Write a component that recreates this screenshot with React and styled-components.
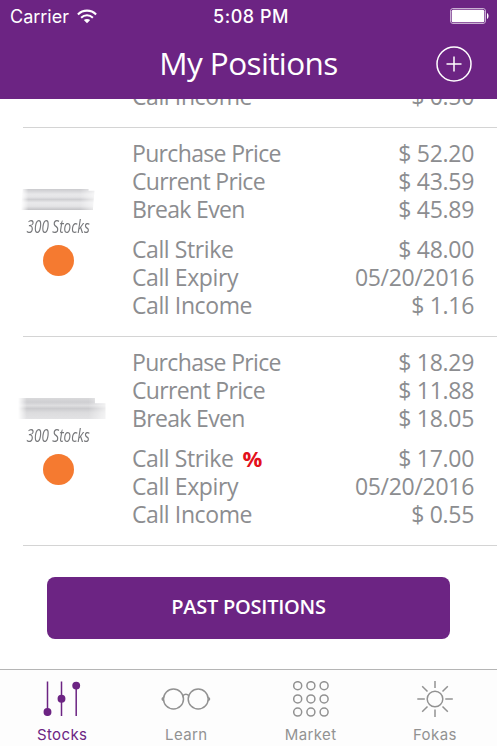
import React, { useState } from "react";
import styled, { createGlobalStyle } from "styled-components";

const positions = [
    {
        id: 1,
        groups: [[{ label: "Call Income", value: "$ 0.50" }]],
    },
    {
        id: 2,
        stocks: "300 Stocks",
        mask: "short",
        groups: [
            [
                { label: "Purchase Price", value: "$ 52.20", tight: true },
                { label: "Current Price", value: "$ 43.59", tight: true },
                { label: "Break Even", value: "$ 45.89", tight: true },
            ],
            [
                { label: "Call Strike", value: "$ 48.00" },
                { label: "Call Expiry", value: "05/20/2016" },
                { label: "Call Income", value: "$ 1.16" },
            ],
        ],
    },
    {
        id: 3,
        stocks: "300 Stocks",
        mask: "long",
        groups: [
            [
                { label: "Purchase Price", value: "$ 18.29", tight: true },
                { label: "Current Price", value: "$ 11.88", tight: true },
                { label: "Break Even", value: "$ 18.05", tight: true },
            ],
            [
                { label: "Call Strike", value: "$ 17.00", percent: true },
                { label: "Call Expiry", value: "05/20/2016" },
                { label: "Call Income", value: "$ 0.55" },
            ],
        ],
    },
];

const WifiIcon = () => (
    <svg width="20" height="15" viewBox="0 0 20 15" fill="none" stroke="#fff" strokeWidth="2.1">
        <path d="M0.9 5.4 C6 0.4 14 0.4 19.1 5.4" />
        <path d="M4.1 8.7 C7.5 5.5 12.5 5.5 15.9 8.7" />
        <path d="M10 14.2 L6.8 11.1 C8.6 9.5 11.4 9.5 13.2 11.1 Z" fill="#fff" stroke="none" />
    </svg>
);

const BatteryIcon = () => (
    <svg width="39" height="16" viewBox="0 0 39 16">
        <rect x="0.5" y="0.5" width="35" height="15" rx="2.5" fill="none" stroke="#c9b0d3" />
        <rect x="1.7" y="1.7" width="32.6" height="12.6" rx="1.5" fill="#fff" />
        <path d="M37 5 C39 5.8 39 10.2 37 11 Z" fill="#fff" />
    </svg>
);

const PlusIcon = () => (
    <svg width="36" height="36" viewBox="0 0 36 36" fill="none" stroke="#fff" strokeWidth="1.5">
        <circle cx="18" cy="18" r="17" />
        <path d="M18 10.5 V25.5 M10.5 18 H25.5" />
    </svg>
);

const StocksIcon = () => (
    <svg width="38" height="36" viewBox="0 0 38 36" fill="#6c2483" stroke="#6c2483" strokeWidth="1.5">
        <path d="M4.5 0.5 V35 M18.5 0.5 V35 M33.2 3 V35" />
        <circle cx="4.5" cy="31" r="3.2" />
        <circle cx="18.5" cy="17.8" r="3.2" />
        <circle cx="33.2" cy="4.6" r="3.2" />
    </svg>
);

const GlassesIcon = () => (
    <svg width="50" height="36" viewBox="0 0 50 36" fill="none" stroke="#929292" strokeWidth="1.5">
        <circle cx="12.5" cy="18" r="10" />
        <circle cx="37.2" cy="18" r="10" />
        <path d="M22 14.8 C23.5 12.8 26.3 12.8 27.8 14.8" />
        <path d="M2.5 16.5 C0.7 17.2 0.7 18.8 2.5 19.5 M47.2 16.5 C49 17.2 49 18.8 47.2 19.5" />
    </svg>
);

const MarketIcon = () => (
    <svg width="36" height="36" viewBox="0 0 36 36" fill="none" stroke="#929292" strokeWidth="1.5">
        {[4.7, 17.9, 31.1].map((y) =>
            [4.7, 17.9, 31.1].map((x) => <circle key={`${x}-${y}`} cx={x} cy={y} r="4" />)
        )}
    </svg>
);

const SunIcon = () => (
    <svg width="36" height="36" viewBox="0 0 36 36" fill="none" stroke="#929292" strokeWidth="1.5">
        <circle cx="18" cy="18" r="7.8" />
        <path d="M18 0 V7 M18 28.5 V36 M0.3 18 H7.8 M28.3 18 H35.8" />
        <path d="M5.2 5.2 L10.5 10.5 M25.5 10.5 L30.8 5.2 M5.2 30.8 L10.5 25.5 M25.5 25.5 L30.8 30.8" />
    </svg>
);

const tabs = [
    { name: "Stocks", Icon: StocksIcon },
    { name: "Learn", Icon: GlassesIcon },
    { name: "Market", Icon: MarketIcon },
    { name: "Fokas", Icon: SunIcon },
];

const Position = ({ position }) => (
    <PositionRow>
        <Summary>
            {position.stocks && (
                <>
                    <MaskedName $long={position.mask === "long"} />
                    <StockCount>{position.stocks}</StockCount>
                    <StatusDot />
                </>
            )}
        </Summary>
        <Details>
            {position.groups.map((group, index) => (
                <div key={index}>
                    {group.map(({ label, value, percent, tight }) => (
                        <DetailLine key={label}>
                            <Label $tight={tight}>
                                {label}
                                {percent && <Percent>%</Percent>}
                            </Label>
                            <Value>{value}</Value>
                        </DetailLine>
                    ))}
                </div>
            ))}
        </Details>
    </PositionRow>
);

const App = () => {
    const [activeTab, setActiveTab] = useState("Stocks");

    return (
        <Screen>
            <GlobalStyle />
            <Header>
                <StatusBar>
                    <Carrier>
                        Carrier
                        <WifiIcon />
                    </Carrier>
                    <Clock>5:08 PM</Clock>
                    <Battery>
                        <BatteryIcon />
                    </Battery>
                </StatusBar>
                <NavBar>
                    <Title>My Positions</Title>
                    <AddButton aria-label="Add">
                        <PlusIcon />
                    </AddButton>
                </NavBar>
            </Header>

            <Content>
                {positions.map((position) => (
                    <Position key={position.id} position={position} />
                ))}
                <PastButton>PAST POSITIONS</PastButton>
            </Content>

            <TabBar>
                {tabs.map(({ name, Icon }) => (
                    <Tab key={name} $active={name === activeTab} onClick={() => setActiveTab(name)}>
                        <Icon />
                        <span>{name}</span>
                    </Tab>
                ))}
            </TabBar>
        </Screen>
    );
};

export default App;

const GlobalStyle = createGlobalStyle`
  * {
    box-sizing: border-box;
  }

  body {
    margin: 0;
    background: #fff;
    font-family: "Open Sans", "Noto Sans", sans-serif;
  }

  button {
    padding: 0;
    border: none;
    background: none;
    font-family: inherit;
    cursor: pointer;
  }

  svg {
    display: block;
    flex-shrink: 0;
  }
`;

const Screen = styled.div`
  display: flex;
  flex-direction: column;
  width: 497px;
  height: 746px;
  overflow: hidden;
`;

const Header = styled.header`
  flex: none;
  height: 99px;
  background: #6c2483;
  color: #fff;
`;

const StatusBar = styled.div`
  display: grid;
  grid-template-columns: 1fr auto 1fr;
  align-items: center;
  height: 32px;
  padding: 0 8px 0 10px;
  font-family: Inter, sans-serif;
  font-size: 18px;
`;

const Carrier = styled.div`
  display: flex;
  align-items: center;
  gap: 8px;
`;

const Clock = styled.div`
  padding-left: 3px;
  font-weight: 500;
  letter-spacing: 0.5px;
`;

const Battery = styled.div`
  display: flex;
  justify-content: flex-end;
`;

const NavBar = styled.div`
  display: grid;
  grid-template-columns: 1fr auto 1fr;
  align-items: center;
  height: 63px;
  padding: 0 25px;
`;

const Title = styled.h1`
  grid-column: 2;
  margin: 0;
  padding-bottom: 2px;
  font-size: 31.5px;
  font-weight: 400;
  line-height: 40px;
  letter-spacing: -0.6px;
`;

const AddButton = styled.button`
  justify-self: end;
`;

const Content = styled.main`
  flex: 1;
  display: flex;
  flex-direction: column;
  justify-content: flex-end;
  min-height: 0;
  overflow: hidden;
`;

const PositionRow = styled.section`
  flex: none;
  display: flex;
  margin-left: 23px;
  padding: 11px 23px 17px 0;
  border-bottom: 1px solid #d4d4d4;
`;

const Summary = styled.div`
  display: flex;
  flex-direction: column;
  align-items: center;
  width: 70px;
  margin-right: 39px;
`;

const MaskedName = styled.div`
  flex: none;
  width: ${({ $long }) => ($long ? "88px" : "74px")};
  height: 21px;
  margin: 50px 0 0 ${({ $long }) => ($long ? "7px" : "-1px")};
  background: ${({ $long }) =>
      $long
          ? "linear-gradient(#d9d9db, #cfcfd2 20%, #dedee0 36%, #cbcbce 50%, #dcdcde 70%, #e2e2e4)"
          : "linear-gradient(#cacacd, #e8e8ea 25%, #e5e5e7 38%, #cfcfd2 50%, #e9e9eb 65%, #e4e4e6 82%, #c2c2c5)"};
  clip-path: ${({ $long }) =>
      $long
          ? "polygon(0 0, 88% 0, 88% 25%, 100% 25%, 100% 100%, 0 100%)"
          : "polygon(3% 0, 92% 0, 92% 8%, 100% 8%, 98% 92%, 98% 100%, 0 100%)"};
  mask-image: linear-gradient(90deg, transparent, #000 10%, #000 80%, rgba(0, 0, 0, 0.35));
  filter: blur(0.6px);
`;

const StockCount = styled.div`
  height: 24px;
  margin-top: 4px;
  color: #77787b;
  font-size: 18px;
  font-style: italic;
  line-height: 24px;
  white-space: nowrap;
  transform: scaleX(0.75);
`;

const StatusDot = styled.div`
  flex: none;
  width: 31px;
  height: 31px;
  margin-top: 7px;
  border-radius: 50%;
  background: #f57a30;
`;

const Details = styled.div`
  flex: 1;
  display: flex;
  flex-direction: column;
  gap: 12px;
  color: #8c8d90;
  font-size: 23px;
  line-height: 28px;
`;

const DetailLine = styled.div`
  display: flex;
  justify-content: space-between;
  height: 28px;
  white-space: nowrap;
`;

const Label = styled.span`
  letter-spacing: ${({ $tight }) => ($tight ? "-0.66px" : "-0.4px")};
`;

const Percent = styled.span`
  margin-left: 9px;
  color: #e3101b;
  font-size: 22px;
  font-weight: 700;
`;

const Value = styled.span`
  letter-spacing: -0.3px;
`;

const PastButton = styled.button`
  flex: none;
  height: 62px;
  margin: 31px 47px 30px;
  padding-bottom: 3px;
  border-radius: 8px;
  background: #6c2483;
  color: #fff;
  font-size: 20px;
  font-weight: 600;
  line-height: 28px;
  letter-spacing: -0.25px;
`;

const TabBar = styled.nav`
  flex: none;
  display: grid;
  grid-template-columns: repeat(4, 1fr);
  height: 77px;
  border-top: 1px solid #b5b5b5;
  background: #fdfdfd;
`;

const Tab = styled.button`
  display: flex;
  flex-direction: column;
  align-items: center;
  gap: 9px;
  padding-top: 11px;
  color: ${({ $active }) => ($active ? "#6c2483" : "#929292")};
  font-family: Inter, sans-serif;
  font-size: 15px;
  line-height: 18px;
  letter-spacing: 0.4px;
`;
